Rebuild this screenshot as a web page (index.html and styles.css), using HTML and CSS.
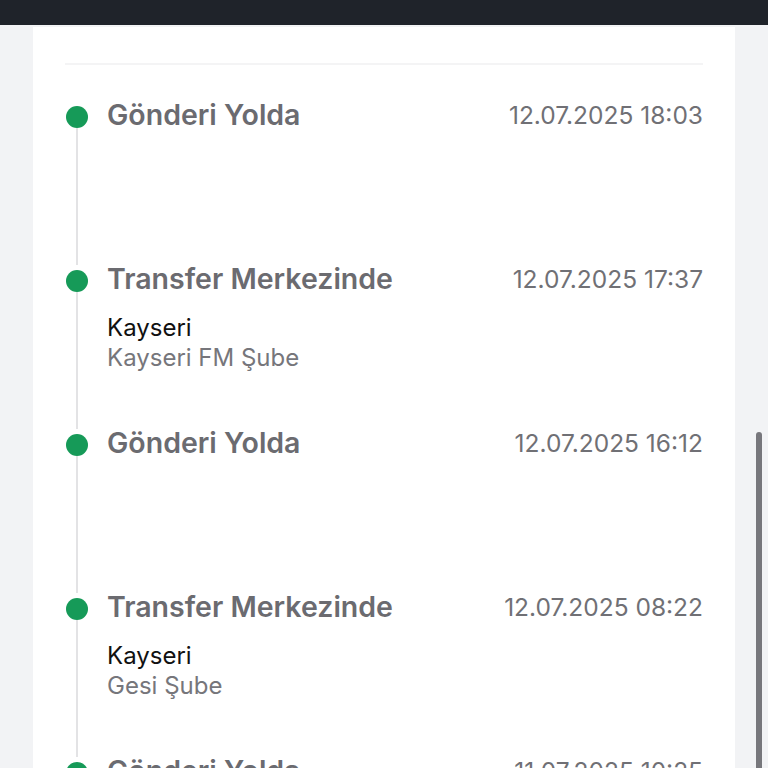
FILE: index.html
```html
<!DOCTYPE html>
<html lang="tr">
<head>
    <meta charset="UTF-8">
    <meta name="viewport" content="width=device-width, initial-scale=1.0">
    <title>Gönderi Takibi</title>
    <link rel="stylesheet" href="styles.css">
</head>
<body>

    <!-- Üst bar -->
    <div class="topbar"></div>

    <div class="page">
        <div class="card">
            <div class="divider"></div>

            <div class="timeline">
                <div class="event">
                    <div class="marker"><span class="dot"></span><span class="stem"></span></div>
                    <div class="body">
                        <div class="head">
                            <span class="title">Gönderi Yolda</span>
                            <span class="date">12.07.2025 18:03</span>
                        </div>
                    </div>
                </div>

                <div class="event">
                    <div class="marker"><span class="dot"></span><span class="stem"></span></div>
                    <div class="body">
                        <div class="head">
                            <span class="title">Transfer Merkezinde</span>
                            <span class="date">12.07.2025 17:37</span>
                        </div>
                        <div class="city">Kayseri</div>
                        <div class="branch">Kayseri FM Şube</div>
                    </div>
                </div>

                <div class="event">
                    <div class="marker"><span class="dot"></span><span class="stem"></span></div>
                    <div class="body">
                        <div class="head">
                            <span class="title">Gönderi Yolda</span>
                            <span class="date">12.07.2025 16:12</span>
                        </div>
                    </div>
                </div>

                <div class="event">
                    <div class="marker"><span class="dot"></span><span class="stem"></span></div>
                    <div class="body">
                        <div class="head">
                            <span class="title">Transfer Merkezinde</span>
                            <span class="date">12.07.2025 08:22</span>
                        </div>
                        <div class="city">Kayseri</div>
                        <div class="branch">Gesi Şube</div>
                    </div>
                </div>

                <div class="event">
                    <div class="marker"><span class="dot"></span><span class="stem"></span></div>
                    <div class="body">
                        <div class="head">
                            <span class="title">Gönderi Yolda</span>
                            <span class="date">11.07.2025 10:25</span>
                        </div>
                    </div>
                </div>
            </div>
        </div>
    </div>

    <!-- Kaydırma çubuğu -->
    <div class="scroll-thumb"></div>

</body>
</html>
```

FILE: styles.css
```css
body {
    font-family: Inter, "Noto Sans", sans-serif;
    background-color: #f2f3f5;
    margin: 0;
    padding: 0;
    height: 768px;
    overflow: hidden;
}
.topbar {
    height: 25px;
    background-color: #1f232a;
}
.page {
    padding: 2px 33px 0 33px;
}
.card {
    background-color: #fff;
    padding: 36px 32px 0 32px;
    min-height: 800px;
}
.divider {
    height: 2px;
    background-color: #f4f4f5;
    margin-bottom: 36px;
}
.event {
    display: flex;
    height: 164px;
}
.marker {
    width: 24px;
    display: flex;
    flex-direction: column;
    align-items: center;
    margin-right: 18px;
}
.dot {
    width: 22px;
    height: 22px;
    border-radius: 50%;
    background-color: #169a58;
    margin-top: 5px;
    flex-shrink: 0;
}
.stem {
    flex: 1;
    width: 2px;
    background-color: #e3e3e5;
}
.body {
    flex: 1;
}
.head {
    display: flex;
    justify-content: space-between;
    align-items: center;
    height: 28px;
}
.title {
    font-size: 28.5px;
    line-height: 28px;
    font-weight: 600;
    color: #6b6b70;
}
.date {
    font-size: 24.5px;
    line-height: 28px;
    color: #707075;
}
.city {
    margin-top: 20px;
    font-size: 24px;
    line-height: 30px;
    color: #111;
}
.branch {
    font-size: 24px;
    line-height: 30px;
    color: #76767b;
}
.scroll-thumb {
    position: absolute;
    left: 756px;
    top: 432px;
    width: 6px;
    height: 360px;
    border-radius: 3px;
    background-color: #77777c;
}
```
